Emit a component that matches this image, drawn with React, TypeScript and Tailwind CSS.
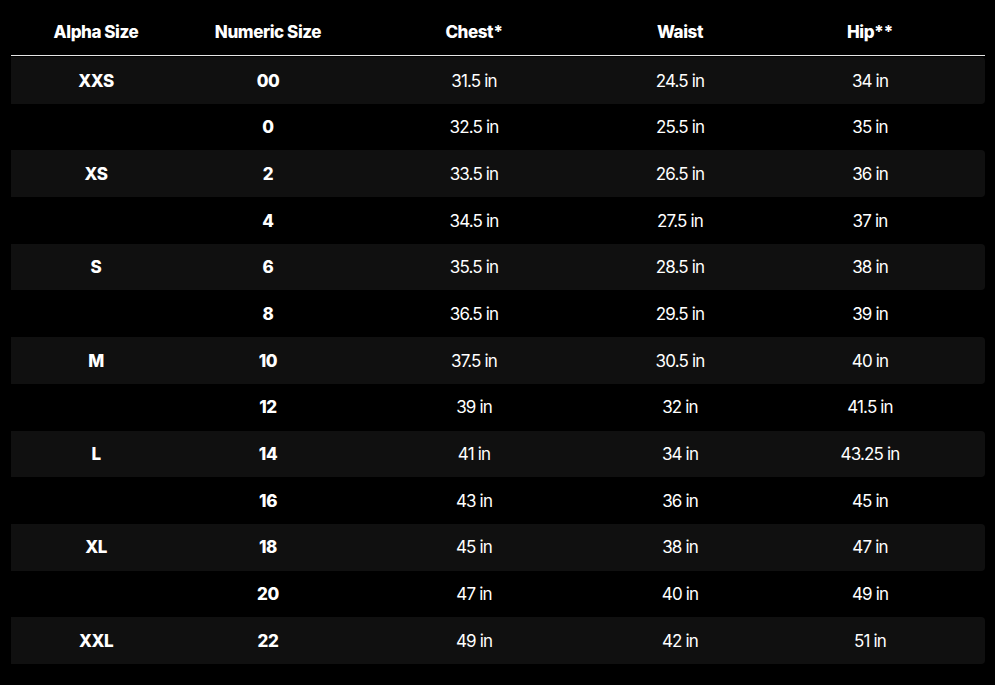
const rows = [
  ['XXS', '00', '31.5 in', '24.5 in', '34 in'],
  ['', '0', '32.5 in', '25.5 in', '35 in'],
  ['XS', '2', '33.5 in', '26.5 in', '36 in'],
  ['', '4', '34.5 in', '27.5 in', '37 in'],
  ['S', '6', '35.5 in', '28.5 in', '38 in'],
  ['', '8', '36.5 in', '29.5 in', '39 in'],
  ['M', '10', '37.5 in', '30.5 in', '40 in'],
  ['', '12', '39 in', '32 in', '41.5 in'],
  ['L', '14', '41 in', '34 in', '43.25 in'],
  ['', '16', '43 in', '36 in', '45 in'],
  ['XL', '18', '45 in', '38 in', '47 in'],
  ['', '20', '47 in', '40 in', '49 in'],
  ['XXL', '22', '49 in', '42 in', '51 in'],
];

const cols = 'grid grid-cols-[170px_174px_238px_174px_206px] items-center text-center';

export default function App() {
  return (
    <div className="min-h-[685px] bg-black pl-[11px] pr-[10px] text-white" style={{ fontFamily: 'Inter, "Noto Sans", sans-serif' }}>
      <div className={`${cols} h-[55px] pt-[10px] text-[17px] font-extrabold tracking-tight`}>
        <div>Alpha Size</div>
        <div>Numeric Size</div>
        <div>Chest*</div>
        <div>Waist</div>
        <div>Hip**</div>
      </div>
      <div className="h-px bg-neutral-200" />
      <div className="pt-px">
        {rows.map((r, i) => (
          <div key={i} className={`${cols} h-[46.7px] pt-[2px] rounded-r-[4px] ${i % 2 === 0 ? 'bg-[#101010]' : ''}`}>
            <div className="text-[17px] font-extrabold tracking-tight">{r[0]}</div>
            <div className="text-[17px] font-extrabold tracking-tight">{r[1]}</div>
            <div className="text-[17px] tracking-tighter">{r[2]}</div>
            <div className="text-[17px] tracking-tighter">{r[3]}</div>
            <div className="text-[17px] tracking-tighter">{r[4]}</div>
          </div>
        ))}
      </div>
    </div>
  );
}
